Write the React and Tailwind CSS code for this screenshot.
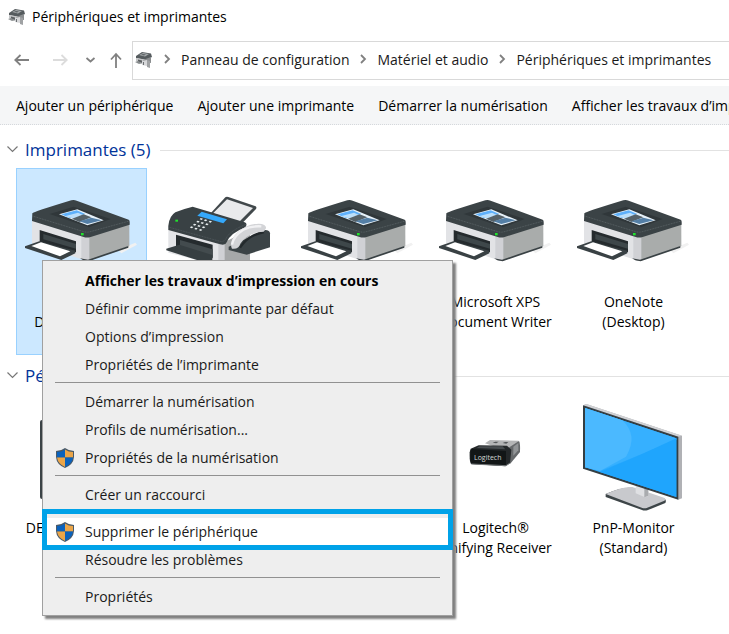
import React from "react";

const commands = [
  "Ajouter un périphérique",
  "Ajouter une imprimante",
  "Démarrer la numérisation",
  "Afficher les travaux d’impression en cours",
];

const breadcrumbs = [
  "Panneau de configuration",
  "Matériel et audio",
  "Périphériques et imprimantes",
];

const menuGroups = [
  [
    { label: "Afficher les travaux d’impression en cours", bold: true },
    { label: "Définir comme imprimante par défaut" },
    { label: "Options d’impression" },
    { label: "Propriétés de l’imprimante" },
  ],
  [
    { label: "Démarrer la numérisation" },
    { label: "Profils de numérisation..." },
    { label: "Propriétés de la numérisation", shield: true },
  ],
  [{ label: "Créer un raccourci" }],
  [
    { label: "Supprimer le périphérique", shield: true, highlighted: true },
    { label: "Résoudre les problèmes" },
  ],
  [{ label: "Propriétés" }],
];

const PrinterIcon = () => (
  <svg viewBox="24 -42 336 336" className="size-28" aria-hidden="true" overflow="visible">
    <path d="M300 180 L352 158 L357 164 L310 190Z" fill="#f1f1f1" />
    <path d="M42 86 L205 134 V212 L42 160Z" fill="#e2e3e6" />
    <path d="M200 136 L334 98 V168 L212 212 L200 210Z" fill="#a9acab" />
    <path d="M190 134 H214 V212 H200 L190 206Z" fill="#d0d1d5" />
    <path d="M186 205 L210 209 L331 168 V173 L212 214 L196 211Z" fill="#394144" />
    <path d="M43 70 Q45 66 160 31 Q168 29 176 32 L332 89 Q335 91 335 96 V104 L218 141 Q207 144 197 141 L42 93Z" fill="#3b4346" />
    <path d="M43 78 L197 125 Q207 128 217 125 L334 93" fill="none" stroke="#646c70" strokeWidth="2" strokeDasharray="3 2" />
    <path d="M95 72 L167 50 L278 87 L213 112Z" fill="#30373a" />
    <path d="M123 73 L178 58 L257 91 L208 106Z" fill="#e7f2fa" />
    <path d="M130 73 L176 61 L202 72 L155 84Z" fill="#5eb0fb" />
    <path d="M140 79 L180 68 L193 74 L166 85Z" fill="#bcdffa" />
    <path d="M162 86 L197 73 L220 82 L184 96Z" fill="#566269" />
    <path d="M184 94 L220 83 L251 91 L208 102Z" fill="#547fa6" />
    <path d="M65 120 L174 154 V187 L65 157Z" fill="#252b2e" />
    <path d="M76 132 L174 162 V176 L76 148Z" fill="#3e474a" />
    <path d="M21 169 L64 154 L172 182 V190 L130 210 L21 174Z" fill="#394144" />
    <path d="M40 168 L69 157 L157 184 L126 199Z" fill="#fff" />
    <rect x="189" y="129" width="8" height="7" fill="#20e32c" />
  </svg>
);

const FaxIcon = () => (
  <svg viewBox="42 -12 336 336" className="size-28" aria-hidden="true">
    <path d="M182 100 L226 52 Q229 49 235 51 L317 79 Q321 82 318 87 L272 134Z" fill="#41484b" />
    <path d="M189 100 L231 58 L309 84 L267 126Z" fill="#e9eaec" />
    <path d="M55 144 L225 188 V262 L55 218Z" fill="#e3e4e7" />
    <path d="M215 190 L300 150 V240 L225 262 L215 258Z" fill="#a6a8a9" />
    <path d="M205 190 H224 V262 L205 256Z" fill="#d0d1d5" />
    <path d="M55 137 Q58 108 76 97 Q98 87 128 80 L284 127 Q294 131 286 142 Q240 160 230 187 Q227 197 210 193 L55 150Z" fill="#394144" />
    <path d="M55 141 L210 184 Q224 186 229 174 Q240 152 288 133" fill="none" stroke="#596165" strokeWidth="2" strokeDasharray="3 2" />
    <path d="M142 107 L155 95 L231 118 L220 130Z" fill="#35a8fa" />
    <g fill="#e8edef">
      <path d="M152 114l7 2-4 4-6-2zM165 118l7 2-4 4-6-2zM179 122l7 2-4 4-6-2z" />
      <path d="M142 122l7 2-4 4-6-2zM155 126l7 2-4 4-6-2zM169 130l7 2-4 4-6-2z" />
      <path d="M132 131l7 2-4 4-6-2zM145 135l7 2-4 4-6-2zM159 139l7 2-4 4-6-2z" />
      <path d="M123 139l7 2-4 4-6-2zM136 143l7 2-4 4-6-2zM150 147l7 2-4 4-6-2z" />
    </g>
    <rect x="76" y="119" width="8" height="6" fill="#20e32c" />
    <path d="M78 164 L188 194 V235 L78 205Z" fill="#252b2e" />
    <path d="M90 180 L188 208 V232 L90 204Z" fill="#434b4e" />
    <path d="M49 206 L88 194 L187 225 V240 L160 246 L49 211Z" fill="#363e41" />
    <path d="M236 200 L345 150 Q360 151 360 160 V202 L290 224 L236 210Z" fill="#3b4346" />
    <path d="M270 203 Q295 165 342 156" fill="none" stroke="#23292c" strokeWidth="7" />
    <path d="M246 206 Q236 185 260 160 Q288 132 326 131 Q350 132 348 145 L341 155 L323 157 Q287 165 271 191 Q266 209 246 206Z" fill="#d3d4d7" />
    <path d="M246 194 Q250 168 280 149 Q303 137 334 139" fill="none" stroke="#f1f1f3" strokeWidth="7" />
  </svg>
);

const ReceiverIcon = () => (
  <svg viewBox="30 36 336 336" className="size-28" aria-hidden="true">
    <path d="M165 160 L180 150 L266 152 L260 170 L225 180Z" fill="#b4b5b6" />
    <path d="M188 158l8-3h10l-7 5zM218 159l7-3h10l-6 5z" fill="#55585a" />
    <path d="M238 172 L267 153 Q271 158 270 186 L240 222Z" fill="#66696b" />
    <path d="M250 170 L265 159 V181 L250 197Z" fill="#919496" />
    <path d="M122 176 L146 166 L231 167 L244 179 L240 220 L226 229 L124 222 Q118 219 119 187Z" fill="#24282a" />
    <path d="M122 180 Q124 176 134 178 L228 183 V227 L126 222 Q119 218 122 180Z" fill="#121617" />
    <path d="M148 169 H218 L226 178 L140 174Z" fill="#484d50" />
    <path d="M124 222 L228 227 L240 219" fill="none" stroke="#777b7d" strokeWidth="3" />
    <text x="132" y="209" fontSize="21" fontFamily="Open Sans, sans-serif" fill="#d4d6d7">Logitech</text>
  </svg>
);

const MonitorIcon = () => (
  <svg viewBox="444 36 336 336" className="size-28" aria-hidden="true">
    <path d="M527 312 Q580 289 607 294 L704 326 Q710 331 706 339 L652 361 Q643 363 634 359 L527 321Z" fill="#3d4548" />
    <path d="M527 312 Q580 288 607 291 L702 323 Q710 328 703 332 L650 354 Q643 356 635 353Z" fill="#c8c9cd" />
    <path d="M617 282 L655 296 V318 L645 322 L617 310Z" fill="#dfe0e3" />
    <path d="M643 292 L655 297 V317 L643 322Z" fill="#a9abae" />
    <path d="M460 46 L469 42 L756 137 V325 L744 329Z" fill="#b0b1b5" />
    <path d="M460 46 L469 42 L756 137 L744 140Z" fill="#d0d1d4" />
    <path d="M459 46 L745 140 V329 L459 236Z" fill="#343e43" />
    <path d="M465 54 L739 145 V321 L465 232Z" fill="#29a9fe" />
    <path d="M465 54 L739 145 V150 L510 243 L465 232Z" fill="#36b0ff" />
    <path d="M465 54 L577 91 Q626 136 588 200 L510 243 L465 232Z" fill="#4bb9ff" />
    <path d="M739 145 L630 195 L510 246 L739 321Z" fill="#1fa5fd" />
  </svg>
);

const ComputerIcon = () => (
  <svg viewBox="0 0 112 112" className="size-28" aria-hidden="true">
    <rect x="14" y="18" width="84" height="79" rx="2" fill="#3b4346" />
    <rect x="17" y="21" width="78" height="73" fill="#596165" />
  </svg>
);

const SmallDevicesIcon = () => (
  <svg viewBox="0 0 18 18" className="size-[18px] shrink-0" aria-hidden="true">
    <path d="M1 5 L7 1 L16 2.5 L17 6 L11 9 L1 7Z" fill="#555b5e" />
    <path d="M4 4 L8 2 L14 3 L10 5.5Z" fill="#a4a8aa" />
    <path d="M6 3.8 L8 3 L11 3.5 L9 4.6Z" fill="#5c6265" />
    <path d="M1 7 L10 8.5 V12 L6 13 L1 10Z" fill="#c4c5c7" />
    <path d="M3 8.6 L7 9.5 V12 L3 10.5Z" fill="#5d6163" />
    <path d="M0 11 L3 10 L7 12 L4 13Z" fill="#888c8e" />
    <path d="M8 9 L16 6 V12 L9 11Z" fill="#8b8e90" />
    <path d="M7 10 L12 9 V15 L7 14Z" fill="#d7d8da" />
    <path d="M12 9 L15 10 V17 L12 16Z" fill="#a0a2a4" />
    <path d="M8 11h1v3H8z" fill="#6a6e71" />
  </svg>
);

const ShieldIcon = () => (
  <svg viewBox="0 0 20 20" className="size-5" aria-hidden="true">
    <path d="M10 0 Q14 3 19 3 V9 Q18.500 16.500 10 20 Q1.500 16.500 1 9 V3 Q6 3 10 0Z" fill="#4a5a68" />
    <path d="M10 1.400 V9.500 H2 V4.100 Q6.500 4 10 1.400Z" fill="#0a62bd" />
    <path d="M10 1.400 Q13.500 4 18 4.100 V9.500 H10Z" fill="#eba548" />
    <path d="M2 9.500 H10 V18.900 Q3 16 2 9.500Z" fill="#eba548" />
    <path d="M10 9.500 H18 Q17 16 10 18.900Z" fill="#0a62bd" />
  </svg>
);

const Arrow = ({ d, stroke = "#808080" }) => (
  <svg viewBox="0 0 16 16" className="size-4" fill="none" stroke={stroke} strokeWidth="1.800" aria-hidden="true">
    <path d={d} />
  </svg>
);

const printers = [
  { name: ["Brother", "DCP-L2540DW"], Icon: PrinterIcon, selected: true },
  { name: ["Fax"], Icon: FaxIcon },
  { name: ["Microsoft Print", "to PDF"], Icon: PrinterIcon },
  { name: ["Microsoft XPS", "Document Writer"], Icon: PrinterIcon },
  { name: ["OneNote", "(Desktop)"], Icon: PrinterIcon },
];

const devices = [
  { name: ["DESKTOP-ACERi7"], Icon: ComputerIcon },
  null,
  null,
  { name: ["Logitech®", "Unifying Receiver"], Icon: ReceiverIcon },
  { name: ["PnP-Monitor", "(Standard)"], Icon: MonitorIcon },
];

const DeviceGroup = ({ title, items }) => (
  <section className="mb-[9px]">
    <h2 className="mb-[6px] flex h-6 items-center pl-[7px] text-[17px] text-[#003399]">
      <button type="button" aria-label={`Réduire ${title}`} className="mr-[7px] size-[11px]">
        <svg viewBox="0 0 11 11" className="size-[11px]" fill="none" stroke="#777" strokeWidth="1.2" aria-hidden="true">
          <path d="M0.500 1.500 L5.500 6.500 L10.500 1.500" />
        </svg>
      </button>
      <span className="whitespace-nowrap">{title}</span>
      <span className="ml-[9px] h-px flex-1 bg-[#e2e2e2]" />
    </h2>
    <div className="grid grid-cols-[repeat(5,131px)] gap-x-[7px] pl-4">
      {items.map((item, i) =>
        item ? (
          <button
            key={i}
            type="button"
            className={
              item.selected
                ? "flex min-h-[187px] flex-col items-center border border-[#99d1ff] bg-[#cce8ff] pt-[7px]"
                : "flex min-h-[187px] flex-col items-center border border-transparent pt-[7px]"
            }
          >
            <item.Icon />
            <span className="mt-1 text-[14px] leading-5 whitespace-nowrap">
              {item.name.map((line) => (
                <span key={line} className="block">
                  {line}
                </span>
              ))}
            </span>
          </button>
        ) : (
          <span key={i} />
        )
      )}
    </div>
  </section>
);

const ContextMenu = () => (
  <div
    role="menu"
    className="absolute top-[260px] left-[42px] w-[411px] border border-[#a0a0a0] bg-[#eeeeee] pt-[6px] pb-1 shadow-[3px_3px_2px_#808080]"
  >
    {menuGroups.map((group, i) => (
      <div key={i}>
        {i > 0 && <hr className="mx-3 mt-[3px] mb-[5px] border-[#919191]" />}
        {group.map((item) => (
          <button
            key={item.label}
            type="button"
            role="menuitem"
            className={
              item.highlighted
                ? "relative flex h-7 w-full items-center bg-white pl-3"
                : "flex h-7 w-full items-center pl-3"
            }
          >
            <span className="w-[30px]">{item.shield && <ShieldIcon />}</span>
            <span className={item.bold ? "font-bold text-black" : "text-[#1a1a1a]"}>
              {item.label}
            </span>
            {item.highlighted && (
              <span className="absolute -inset-x-px -top-[9px] -bottom-1 z-10 border-[5px] border-[#00a2e8]" />
            )}
          </button>
        ))}
      </div>
    ))}
  </div>
);

export default function App() {
  return (
    <div className="relative min-h-screen w-full overflow-hidden bg-white font-['Open_Sans','Noto_Sans',sans-serif] text-[14px] leading-5 text-black">
      <header className="flex h-[34px] items-center gap-[6px] pl-2">
        <SmallDevicesIcon />
        <h1 className="whitespace-nowrap">Périphériques et imprimantes</h1>
      </header>

      <nav className="flex h-[52px] items-center">
        <button type="button" aria-label="Précédent" className="ml-[14px]">
          <Arrow d="M15 8H1M6.500 3L1.300 8L6.500 13" />
        </button>
        <button type="button" aria-label="Suivant" className="ml-[22px]">
          <Arrow d="M1 8H15M9.500 3L14.700 8L9.500 13" stroke="#dcdcdc" />
        </button>
        <button type="button" aria-label="Emplacements récents" className="ml-[14px]">
          <Arrow d="M4.500 6L8.500 9.500L12.500 6" />
        </button>
        <button type="button" aria-label="Niveau supérieur" className="ml-[10px]">
          <Arrow d="M8 16V2M3 7.500L8 2L13 7.500" />
        </button>
        <div className="ml-2 flex h-[39px] min-w-0 flex-1 items-center border-y border-l border-[#d9d9d9] pl-[2px]">
          <SmallDevicesIcon />
          {breadcrumbs.map((crumb) => (
            <React.Fragment key={crumb}>
              <svg viewBox="0 0 28 16" className="h-4 w-7 shrink-0" fill="none" stroke="#808080" strokeWidth="1.800" aria-hidden="true">
                <path d="M12 3L16 7L12 11" />
              </svg>
              <a href="#" className="whitespace-nowrap text-[#1a1a1a]">
                {crumb}
              </a>
            </React.Fragment>
          ))}
        </div>
      </nav>

      <div className="flex h-[39px] items-center gap-6 overflow-hidden border-b border-dotted border-[#d5d8dc] bg-[#f5f6f7] pt-px pl-4">
        {commands.map((command) => (
          <button key={command} type="button" className="shrink-0 whitespace-nowrap">
            {command}
          </button>
        ))}
      </div>

      <main className="pt-[13px]">
        <DeviceGroup title="Imprimantes (5)" items={printers} />
        <DeviceGroup title="Périphériques (3)" items={devices} />
      </main>

      <ContextMenu />
    </div>
  );
}
